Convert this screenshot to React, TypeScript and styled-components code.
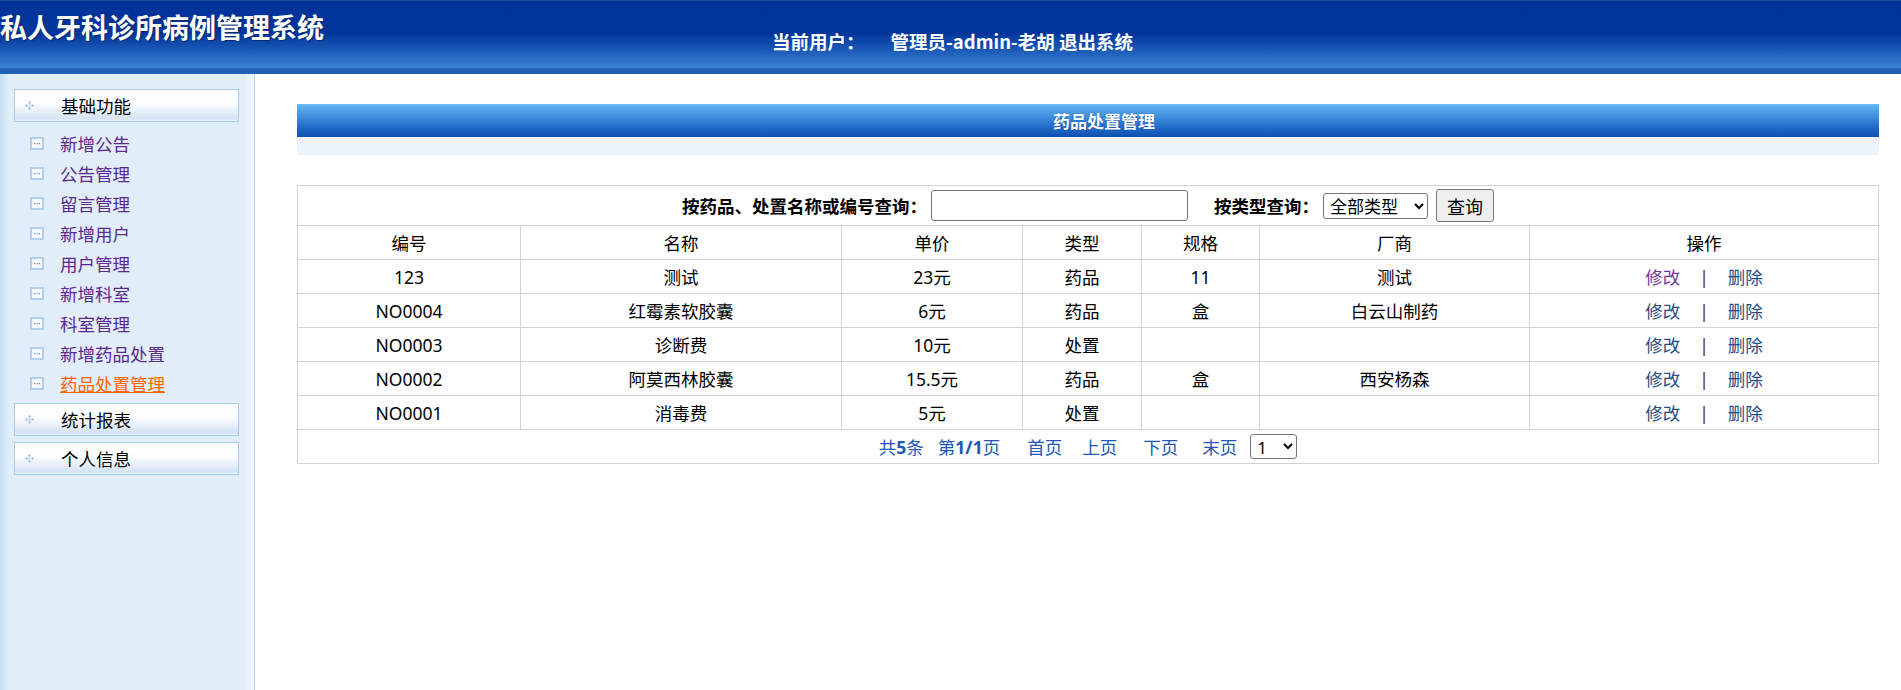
import React from "react";
import styled, { createGlobalStyle } from "styled-components";

const GlobalStyle = createGlobalStyle`
  html, body { margin: 0; padding: 0; }
  body {
    font-family: "Noto Sans", "Noto Sans CJK SC", sans-serif;
    background: #ffffff;
    color: #000;
  }
  * { box-sizing: border-box; }
`;

const Page = styled.div`
  display: flex;
  flex-direction: column;
  height: 690px;
  width: 1901px;
  overflow: hidden;
`;

const Header = styled.header`
  height: 74px;
  border-top: 1px solid #1a4aa3;
  border-bottom: 6px solid #2162b9;
  background: linear-gradient(to bottom, #003399 0%, #00359b 48%, #1d5cb8 75%, #3c84d4 100%);
  display: flex;
  align-items: flex-start;
  color: #fff;
`;

const SiteTitle = styled.h1`
  margin: 12px 0 0 0;
  font-size: 27px;
  line-height: 28px;
  font-weight: 700;
  font-family: "Noto Sans CJK SC", sans-serif;
  text-shadow: 1px 1px 1px #0b2a6e;
  white-space: nowrap;
`;

const UserInfo = styled.div`
  margin: 30px 0 0 448px;
  font-size: 18.5px;
  line-height: 20px;
  font-weight: 700;
  font-family: "Noto Sans CJK SC", sans-serif;
  white-space: nowrap;
  display: flex;
  gap: 26px;
`;

const Body = styled.div`
  display: flex;
  flex: 1;
  min-height: 0;
`;

const Sidebar = styled.nav`
  width: 255px;
  flex-shrink: 0;
  border-right: 1px solid #bcd4ef;
  background: linear-gradient(to right, #c6dbf3 0px, #e1edf9 9px, #e1edf9 244px, #f5f9fe 254px);
  padding: 15px 0 0 14px;
`;

const MenuHead = styled.div`
  width: 225px;
  height: 33px;
  border: 1px solid #a9cbef;
  background: linear-gradient(to bottom, #ffffff 0%, #fbfcfe 45%, #d5e3f5 92%, #e9f1fb 100%);
  display: flex;
  align-items: center;
  padding-left: 10px;
  font-size: 17.5px;
  color: #000;
  margin-bottom: 6px;
`;

const HeadIcon = styled.svg`
  width: 9px;
  height: 9px;
  margin-right: 27px;
`;

const ItemList = styled.ul`
  list-style: none;
  margin: 0 0 5px 0;
  padding: 0;
`;

const Item = styled.li`
  height: 30px;
  display: flex;
  align-items: center;
  padding-left: 16px;
  gap: 16px;
  font-size: 17.5px;
`;

const ItemIcon = styled.svg`
  width: 14px;
  height: 13px;
  flex-shrink: 0;
`;

const ItemLink = styled.a<{ $active?: boolean }>`
  color: ${(p) => (p.$active ? "#ff6600" : "#5a2a8e")};
  text-decoration: ${(p) => (p.$active ? "underline" : "none")};
  cursor: pointer;
`;

const Main = styled.main`
  flex: 1;
  padding: 30px 23px 0 42px;
  background: #fff;
`;

const TitleBar = styled.div`
  height: 33px;
  background: linear-gradient(to bottom, #6cc0f4 0%, #56abec 12%, #3d8ddc 40%, #2670cc 65%, #0f4fb1 100%);
  color: #fff;
  font-weight: 700;
  font-family: "Noto Sans CJK SC", sans-serif;
  font-size: 17px;
  display: flex;
  align-items: center;
  justify-content: center;
  padding-left: 32px;
  text-shadow: 0 0 1px #0a3c90;
`;

const SubBand = styled.div`
  height: 18px;
  background: #ecf3fb;
`;

const Table = styled.table`
  margin-top: 30px;
  width: 1581px;
  border-collapse: collapse;
  table-layout: fixed;
  border: 1px solid #d0d0d0;
  font-size: 17.5px;
`;

const Cell = styled.td`
  border: 1px solid #d3d3d3;
  height: 34px;
  padding: 0;
  text-align: center;
  vertical-align: middle;
  color: #000;
  white-space: nowrap;
`;

const SearchCell = styled(Cell)`
  height: 40px;
`;

const SearchBar = styled.div`
  display: flex;
  align-items: center;
  justify-content: center;
`;

const Label = styled.span<{ $ml?: number }>`
  font-weight: 700;
  font-family: "Noto Sans CJK SC", sans-serif;
  margin-left: ${(p) => p.$ml ?? 0}px;
`;

const TextInput = styled.input`
  width: 257px;
  height: 31px;
  margin-left: 4px;
  border: 1px solid #767676;
  border-radius: 3px;
  background: #fff;
`;

const Select = styled.select<{ $w: number; $h: number; $ml: number }>`
  width: ${(p) => p.$w}px;
  height: ${(p) => p.$h}px;
  margin-left: ${(p) => p.$ml}px;
  font-size: 17px;
  font-family: "Noto Sans", "Noto Sans CJK SC", sans-serif;
  border: 1px solid #767676;
  border-radius: 3px;
  background: #fff;
  color: #000;
  padding: 0 0 0 2px;
`;

const Button = styled.button`
  width: 58px;
  height: 33px;
  margin-left: 8px;
  font-size: 18px;
  font-family: "Noto Sans CJK SC", sans-serif;
  border: 1px solid #767676;
  border-radius: 3px;
  background: #efefef;
  color: #000;
  padding: 0;
`;

const OpLink = styled.a<{ $visited?: boolean }>`
  color: ${(p) => (p.$visited ? "#6b3a9c" : "#284c86")};
  text-decoration: none;
  cursor: pointer;
`;

const Sep = styled.span`
  color: #6b2200;
  margin: 0 19px;
`;

const Pager = styled.div`
  display: flex;
  align-items: center;
  justify-content: center;
  color: #2058b4;
`;

const PageLink = styled.a<{ $ml?: number }>`
  color: #2058b4;
  text-decoration: none;
  margin-left: ${(p) => p.$ml ?? 0}px;
  cursor: pointer;
`;

const B = styled.b`
  font-weight: 700;
`;

const menuItems = [
  "新增公告",
  "公告管理",
  "留言管理",
  "新增用户",
  "用户管理",
  "新增科室",
  "科室管理",
  "新增药品处置",
  "药品处置管理",
];

const rows = [
  { id: "123", name: "测试", price: "23元", type: "药品", spec: "11", maker: "测试", visited: true },
  { id: "NO0004", name: "红霉素软胶囊", price: "6元", type: "药品", spec: "盒", maker: "白云山制药" },
  { id: "NO0003", name: "诊断费", price: "10元", type: "处置", spec: "", maker: "" },
  { id: "NO0002", name: "阿莫西林胶囊", price: "15.5元", type: "药品", spec: "盒", maker: "西安杨森" },
  { id: "NO0001", name: "消毒费", price: "5元", type: "处置", spec: "", maker: "" },
];

const colWidths = [223, 321, 181, 119, 118, 270, 349];
const heads = ["编号", "名称", "单价", "类型", "规格", "厂商", "操作"];

const DotCross = () => (
  <HeadIcon viewBox="0 0 9 9">
    <rect x="3.5" y="0.5" width="2" height="2" fill="#9ab6dc" />
    <rect x="0.5" y="3.5" width="2" height="2" fill="#9ab6dc" />
    <rect x="3.5" y="3.5" width="2" height="2" fill="#c0d3ec" />
    <rect x="6.5" y="3.5" width="2" height="2" fill="#9ab6dc" />
    <rect x="3.5" y="6.5" width="2" height="2" fill="#9ab6dc" />
  </HeadIcon>
);

const DotBox = () => (
  <ItemIcon viewBox="0 0 14 13">
    <rect x="1" y="1" width="12" height="11" fill="#f6f9fd" stroke="#b3cfee" strokeWidth="2" />
    <rect x="4" y="6" width="1.2" height="1.2" fill="#7390b8" />
    <rect x="6.4" y="6" width="1.2" height="1.2" fill="#7390b8" />
    <rect x="8.8" y="6" width="1.2" height="1.2" fill="#7390b8" />
  </ItemIcon>
);

export default function App() {
  return (
    <Page>
      <GlobalStyle />
      <Header>
        <SiteTitle>私人牙科诊所病例管理系统</SiteTitle>
        <UserInfo>
          <span>当前用户：</span>
          <span>管理员-admin-老胡 退出系统</span>
        </UserInfo>
      </Header>
      <Body>
        <Sidebar>
          <MenuHead>
            <DotCross />
            基础功能
          </MenuHead>
          <ItemList>
            {menuItems.map((m, i) => (
              <Item key={m}>
                <DotBox />
                <ItemLink $active={i === menuItems.length - 1}>{m}</ItemLink>
              </Item>
            ))}
          </ItemList>
          <MenuHead>
            <DotCross />
            统计报表
          </MenuHead>
          <MenuHead>
            <DotCross />
            个人信息
          </MenuHead>
        </Sidebar>
        <Main>
          <TitleBar>药品处置管理</TitleBar>
          <SubBand />
          <Table>
            <colgroup>
              {colWidths.map((w, i) => (
                <col key={i} style={{ width: w }} />
              ))}
            </colgroup>
            <tbody>
              <tr>
                <SearchCell colSpan={7}>
                  <SearchBar>
                    <Label>按药品、处置名称或编号查询：</Label>
                    <TextInput type="text" />
                    <Label $ml={26}>按类型查询：</Label>
                    <Select $w={105} $h={26} $ml={4} defaultValue="all">
                      <option value="all">全部类型</option>
                      <option value="drug">药品</option>
                      <option value="op">处置</option>
                    </Select>
                    <Button>查询</Button>
                  </SearchBar>
                </SearchCell>
              </tr>
              <tr>
                {heads.map((h) => (
                  <Cell key={h}>{h}</Cell>
                ))}
              </tr>
              {rows.map((r) => (
                <tr key={r.id}>
                  <Cell>{r.id}</Cell>
                  <Cell>{r.name}</Cell>
                  <Cell>{r.price}</Cell>
                  <Cell>{r.type}</Cell>
                  <Cell>{r.spec}</Cell>
                  <Cell>{r.maker}</Cell>
                  <Cell>
                    <OpLink $visited={r.visited}>修改</OpLink>
                    <Sep>|</Sep>
                    <OpLink>删除</OpLink>
                  </Cell>
                </tr>
              ))}
              <tr>
                <Cell colSpan={7}>
                  <Pager>
                    <span>
                      共<B>5</B>条
                    </span>
                    <PageLink $ml={14}>
                      第<B>1/1</B>页
                    </PageLink>
                    <PageLink $ml={27}>首页</PageLink>
                    <PageLink $ml={20}>上页</PageLink>
                    <PageLink $ml={26}>下页</PageLink>
                    <PageLink $ml={24}>末页</PageLink>
                    <Select $w={47} $h={25} $ml={13} defaultValue="1">
                      <option value="1">1</option>
                    </Select>
                  </Pager>
                </Cell>
              </tr>
            </tbody>
          </Table>
        </Main>
      </Body>
    </Page>
  );
}
